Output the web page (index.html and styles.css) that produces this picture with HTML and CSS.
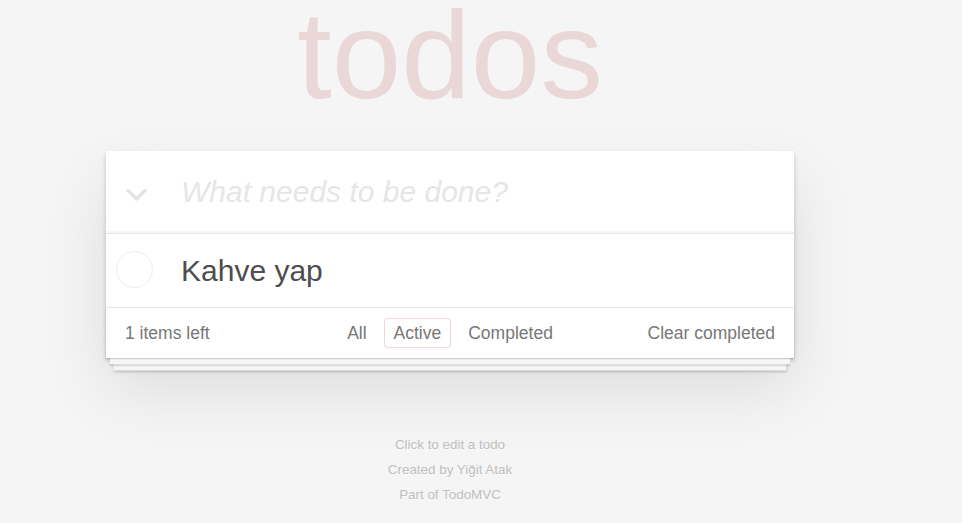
FILE: index.html
```html
<!DOCTYPE html>
<html lang="tr">
<head>
<meta charset="utf-8">
<title>TodoMVC</title>
<link rel="stylesheet" href="styles.css">
</head>
<body>
<div class="page">
  <section class="todoapp">
    <header class="header">
      <h1 class="title">todos</h1>
      <svg class="toggle-all" width="21" height="14" viewBox="0 0 21 14" aria-hidden="true">
        <polyline points="2,2.5 10.5,11 19,2.5" fill="none" stroke="#e3e3e3" stroke-width="3.2" stroke-linecap="round" stroke-linejoin="round"/>
      </svg>
      <input class="new-todo" placeholder="What needs to be done?">
    </header>
    <section class="main">
      <ul class="todo-list">
        <li class="todo">
          <span class="toggle"></span>
          <label class="todo-label">Kahve yap</label>
        </li>
      </ul>
    </section>
    <footer class="footer">
      <span class="todo-count">1 items left</span>
      <ul class="filters">
        <li><a class="filter" href="#/">All</a></li>
        <li><a class="filter selected" href="#/active">Active</a></li>
        <li><a class="filter" href="#/completed">Completed</a></li>
      </ul>
      <button class="clear-completed">Clear completed</button>
    </footer>
  </section>
  <footer class="info">
    <p>Click to edit a todo</p>
    <p>Created by Yiğit Atak</p>
    <p>Part of TodoMVC</p>
  </footer>
</div>
</body>
</html>
```

FILE: styles.css
```css
html, body {
  margin: 0;
  padding: 0;
}

body {
  background: #f5f5f5;
  color: #4d4d4d;
  font-family: "Liberation Sans", Arial, Helvetica, sans-serif;
  font-size: 17.5px;
  line-height: 24.5px;
}

.page {
  width: 688px;
  margin-left: 106px;
  padding-top: 1px;
}

.todoapp {
  position: relative;
  background: #fff;
  margin: 150px 0 50px 0;
  box-shadow: 0 2.5px 5px 0 rgba(0, 0, 0, 0.2), 0 31px 62px 0 rgba(0, 0, 0, 0.1);
}

.title {
  position: absolute;
  top: -146px;
  left: 0;
  right: 0;
  margin: 0;
  font-size: 125px;
  line-height: 100px;
  font-weight: normal;
  text-align: center;
  color: rgba(175, 47, 47, 0.15);
}

.header {
  display: flex;
  align-items: center;
  height: 82px;
  padding-left: 20px;
  box-shadow: inset 0 -2px 1px rgba(0, 0, 0, 0.03);
}

.toggle-all {
  flex: none;
  margin-top: 6px;
}

.new-todo {
  flex: 1;
  margin-left: 34px;
  height: 82px;
  padding: 0;
  border: none;
  outline: none;
  background: transparent;
  font-family: inherit;
  font-size: 30px;
  color: #4d4d4d;
}

.new-todo::placeholder {
  font-style: italic;
  color: #e6e6e6;
}

.main {
  border-top: 1px solid #e6e6e6;
}

.todo-list {
  margin: 0;
  padding: 0;
  list-style: none;
}

.todo {
  display: flex;
  align-items: center;
  height: 73px;
  padding-left: 10px;
}

.toggle {
  flex: none;
  width: 37px;
  height: 37px;
  border: 1px solid #ededed;
  border-radius: 50%;
  box-sizing: border-box;
  margin-top: -2px;
}

.todo-label {
  margin-left: 28px;
  font-size: 30px;
  line-height: 36px;
  color: #4d4d4d;
}

.footer {
  position: relative;
  display: grid;
  grid-template-columns: 1fr auto 1fr;
  align-items: center;
  height: 50px;
  padding: 0 19px;
  border-top: 1px solid #e6e6e6;
  color: #777;
}

.footer::before {
  content: "";
  position: absolute;
  left: 0;
  right: 0;
  bottom: 0;
  height: 50px;
  overflow: hidden;
  box-shadow: 0 1.25px 1.25px rgba(0, 0, 0, 0.2),
              0 10px 0 -3.75px #f6f6f6,
              0 11.25px 1.25px -3.75px rgba(0, 0, 0, 0.2),
              0 20px 0 -7.5px #f6f6f6,
              0 21.25px 2.5px -7.5px rgba(0, 0, 0, 0.2);
  pointer-events: none;
}

.todo-count {
  justify-self: start;
}

.filters {
  display: flex;
  margin: 0;
  padding: 0;
  list-style: none;
}

.filter {
  display: block;
  margin: 3.75px;
  padding: 3.75px 8.75px;
  line-height: 20px;
  border: 1px solid transparent;
  border-radius: 3.75px;
  color: inherit;
  text-decoration: none;
}

.filter.selected {
  border-color: rgba(175, 47, 47, 0.2);
}

.clear-completed {
  justify-self: end;
  margin: 0;
  padding: 0;
  border: none;
  background: none;
  font-family: inherit;
  font-size: 17.5px;
  line-height: 24.5px;
  color: #777;
  cursor: pointer;
}

.info {
  margin-top: 81px;
  text-align: center;
  color: #bfbfbf;
  font-size: 13.4px;
  line-height: 12.5px;
  text-shadow: 0 1px 0 rgba(255, 255, 255, 0.5);
}

.info p {
  margin: 12.5px 0;
}
```
